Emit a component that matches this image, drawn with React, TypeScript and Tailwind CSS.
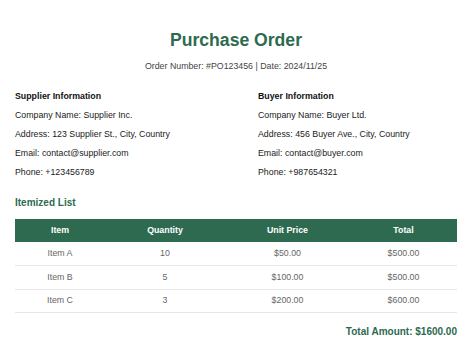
const items = [
  { name: "Item A", qty: 10, price: "$50.00", total: "$500.00" },
  { name: "Item B", qty: 5, price: "$100.00", total: "$500.00" },
  { name: "Item C", qty: 3, price: "$200.00", total: "$600.00" },
];

function Party({ title, lines }: { title: string; lines: string[] }) {
  return (
    <div className="flex flex-col">
      <div className="text-[8.8px] font-bold text-[#111] leading-[19px]">{title}</div>
      {lines.map((l) => (
        <div key={l} className="text-[8.8px] text-[#1a1a1a] leading-[19px]">
          {l}
        </div>
      ))}
    </div>
  );
}

export default function App() {
  return (
    <div className="w-[474px] h-[363px] bg-white pl-[15px] pr-[17px] pt-[29px] font-['Liberation_Sans',Arial,sans-serif]">
      <h1 className="text-center text-[17.6px] font-bold text-[#2d6a4f] leading-[22px]">Purchase Order</h1>
      <p className="mt-[9px] text-center text-[8.8px] text-[#444] leading-[12px]">
        Order Number: #PO123456 | Date: 2024/11/25
      </p>
      <div className="mt-[15px] grid grid-cols-[243px_1fr]">
        <Party
          title="Supplier Information"
          lines={[
            "Company Name: Supplier Inc.",
            "Address: 123 Supplier St., City, Country",
            "Email: contact@supplier.com",
            "Phone: +123456789",
          ]}
        />
        <Party
          title="Buyer Information"
          lines={[
            "Company Name: Buyer Ltd.",
            "Address: 456 Buyer Ave., City, Country",
            "Email: contact@buyer.com",
            "Phone: +987654321",
          ]}
        />
      </div>
      <h2 className="mt-[14px] text-[10px] font-bold text-[#2d6a4f] leading-[14px]">Itemized List</h2>
      <table className="mt-[9px] w-full border-collapse text-[8.8px]">
        <thead>
          <tr className="bg-[#2d6a4f] text-white h-[23px]">
            <th className="w-[90px] font-bold">Item</th>
            <th className="w-[120px] font-bold">Quantity</th>
            <th className="w-[125px] font-bold">Unit Price</th>
            <th className="font-bold">Total</th>
          </tr>
        </thead>
        <tbody>
          {items.map((it) => (
            <tr key={it.name} className="h-[23.5px] border-b border-[#e6e6e6] text-[#666] text-center">
              <td>{it.name}</td>
              <td>{it.qty}</td>
              <td>{it.price}</td>
              <td>{it.total}</td>
            </tr>
          ))}
        </tbody>
      </table>
      <div className="mt-[11px] text-right text-[10px] font-bold text-[#2d6a4f]">Total Amount: $1600.00</div>
    </div>
  );
}
